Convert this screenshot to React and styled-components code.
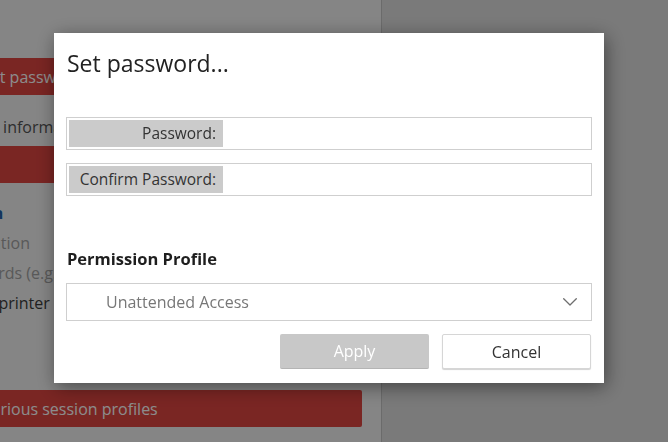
import styled, { createGlobalStyle } from "styled-components";

const GlobalStyle = createGlobalStyle`
  html, body {
    margin: 0;
    padding: 0;
    width: 668px;
    height: 442px;
    overflow: hidden;
    font-family: "Open Sans", "Noto Sans", sans-serif;
  }
  * {
    box-sizing: border-box;
  }
`;

const ChevronIcon = () => (
  <svg width="14" height="8" viewBox="0 0 14 8" fill="none">
    <polyline
      points="0.7,0.7 7,7 13.3,0.7"
      stroke="#6e6e6e"
      strokeWidth="1.3"
      strokeLinecap="round"
      strokeLinejoin="round"
    />
  </svg>
);

const App = () => {
  return (
    <>
      <GlobalStyle />
      <Page>
        <SidePanel>
          <SideInner>
            <RedButton>Set password</RedButton>
            <InfoLine>View information</InfoLine>
            <RedButton centered>Generate</RedButton>
            <SectionHeading>Main</SectionHeading>
            <ListLine indent={-2}>Duration</ListLine>
            <ListLine indent={-4}>Records (e.g. clipboard)</ListLine>
            <ListLine dark>Use printer</ListLine>
            <BottomButton>Various session profiles</BottomButton>
          </SideInner>
        </SidePanel>
        <MainArea />
      </Page>

      <Overlay>
        <Dialog>
          <Title>Set password...</Title>

          <Field>
            <FieldLabel>Password:</FieldLabel>
            <FieldInput type="password" />
          </Field>
          <Field spaced>
            <FieldLabel>Confirm Password:</FieldLabel>
            <FieldInput type="password" />
          </Field>

          <SectionTitle>Permission Profile</SectionTitle>
          <Select>
            <SelectValue>Unattended Access</SelectValue>
            <ChevronIcon />
          </Select>

          <Actions>
            <ApplyButton>Apply</ApplyButton>
            <CancelButton>Cancel</CancelButton>
          </Actions>
        </Dialog>
      </Overlay>
    </>
  );
};

export default App;

const Page = styled.div`
  display: flex;
  width: 668px;
  height: 442px;
  background: #dedede;
`;

const SidePanel = styled.div`
  width: 382px;
  height: 100%;
  background: #f2f2f2;
  border-right: 1px solid #c4c4c4;
  overflow: hidden;
`;

const SideInner = styled.div`
  display: flex;
  flex-direction: column;
  width: 396px;
  margin-left: -34px;
  padding-top: 58px;
  font-size: 16px;
`;

const RedButton = styled.div`
  height: 37px;
  display: flex;
  align-items: center;
  justify-content: ${(p) => (p.centered ? "center" : "flex-start")};
  padding-left: 16px;
  background: #de4540;
  color: #ffffff;
  border-radius: 2px;
  margin-bottom: 8px;
`;

const InfoLine = styled.div`
  height: 22px;
  line-height: 22px;
  margin: 13px 0 8px -2px;
  color: #545454;
`;

const SectionHeading = styled.div`
  height: 30px;
  line-height: 30px;
  margin: 7px 0 0 -3px;
  font-weight: 700;
  color: #1f5fa8;
`;

const ListLine = styled.div`
  height: 30px;
  line-height: 30px;
  margin-left: ${(p) => p.indent || 0}px;
  color: ${(p) => (p.dark ? "#3c3c3c" : "#a2a2a2")};
`;

const BottomButton = styled(RedButton)`
  margin-top: 72px;
  width: 396px;
`;

const MainArea = styled.div`
  flex: 1;
  height: 100%;
`;

const Overlay = styled.div`
  position: fixed;
  inset: 0;
  background: rgba(0, 0, 0, 0.45);
  display: flex;
  align-items: flex-start;
  justify-content: flex-start;
  padding: 33px 0 0 54px;
`;

const Dialog = styled.div`
  width: 550px;
  background: #ffffff;
  padding: 12px 12px 14px;
  display: flex;
  flex-direction: column;
  box-shadow: 2px 4px 18px rgba(0, 0, 0, 0.45);
`;

const Title = styled.h2`
  margin: 2px 0 38px 1px;
  font-size: 23px;
  line-height: 32px;
  font-weight: 400;
  color: #222222;
`;

const Field = styled.div`
  display: flex;
  align-items: stretch;
  height: 33px;
  padding: 2px;
  border: 1px solid #cfcfcf;
  margin-top: ${(p) => (p.spaced ? "13px" : "0")};
`;

const FieldLabel = styled.label`
  width: 154px;
  flex-shrink: 0;
  background: #cbcbcb;
  color: #333333;
  font-size: 15.5px;
  line-height: 27px;
  text-align: right;
  padding-right: 7px;
  white-space: nowrap;
`;

const FieldInput = styled.input`
  flex: 1;
  border: none;
  outline: none;
  background: transparent;
  font-size: 15px;
  padding: 0 8px;
`;

const SectionTitle = styled.div`
  margin: 52px 0 13px 1px;
  font-size: 16.5px;
  line-height: 22px;
  font-weight: 700;
  color: #1e1e1e;
`;

const Select = styled.div`
  height: 38px;
  display: flex;
  align-items: center;
  justify-content: space-between;
  padding: 0 14px 0 39px;
  border: 1px solid #cfcfcf;
`;

const SelectValue = styled.span`
  font-size: 16px;
  color: #777777;
`;

const Actions = styled.div`
  display: flex;
  justify-content: flex-end;
  gap: 13px;
  margin-top: 13px;
  padding-right: 1px;
`;

const BaseButton = styled.button`
  width: 149px;
  height: 35px;
  font-family: inherit;
  font-size: 16px;
  border-radius: 2px;
  cursor: pointer;
`;

const ApplyButton = styled(BaseButton)`
  background: #c8c8c8;
  color: #ffffff;
  border: none;
  border-bottom: 1px solid #b4b4b4;
`;

const CancelButton = styled(BaseButton)`
  background: #ffffff;
  color: #333333;
  border: 1px solid #d6d6d6;
  box-shadow: 0 1px 1px rgba(0, 0, 0, 0.18);
`;
